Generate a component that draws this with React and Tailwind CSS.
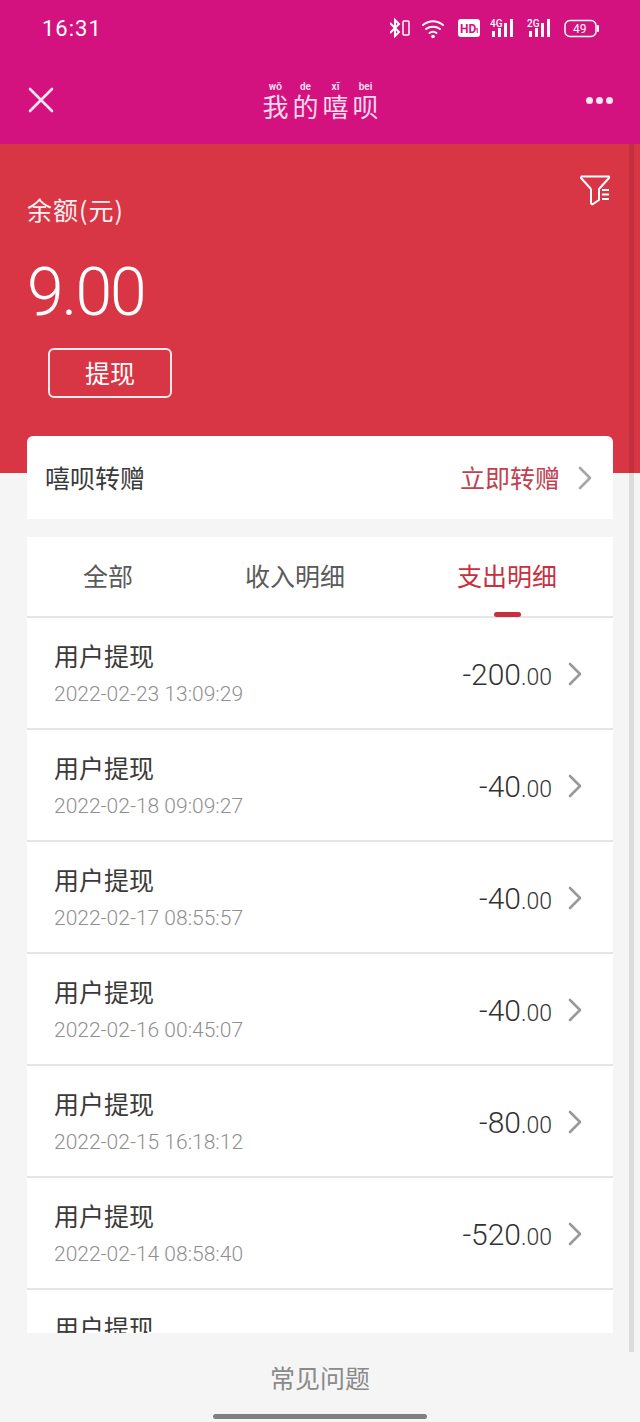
const cjk = { fontFamily: '"Noto Sans CJK SC", sans-serif' };

const rows = [
  { time: '2022-02-23 13:09:29', amount: '-200' },
  { time: '2022-02-18 09:09:27', amount: '-40' },
  { time: '2022-02-17 08:55:57', amount: '-40' },
  { time: '2022-02-16 00:45:07', amount: '-40' },
  { time: '2022-02-15 16:18:12', amount: '-80' },
  { time: '2022-02-14 08:58:40', amount: '-520' },
];

const titleChars = [
  ['wǒ', '我'],
  ['de', '的'],
  ['xī', '嘻'],
  ['bei', '呗'],
];

function Chevron({ className }) {
  return (
    <svg width="14" height="24" viewBox="0 0 14 24" fill="none" stroke="currentColor" strokeWidth="2.6" strokeLinecap="round" strokeLinejoin="round" className={className}>
      <path d="M2 2l10 10L2 22" />
    </svg>
  );
}

function StatusIcons() {
  return (
    <svg width="212" height="24" viewBox="0 0 212 24" fill="none">
      {/* bluetooth + vibrate */}
      <path d="M0 7l9 9-4 4V4l4 4-9 9" stroke="#fff" strokeWidth="2" />
      <rect x="13" y="5" width="6" height="14" rx="1" stroke="#fff" strokeWidth="1.500" />
      {/* wifi */}
      <path d="M33 9c6-5 14-5 20 0M36 13c4-3 10-3 14 0M39.500 17c2-1.500 5-1.500 7 0" stroke="#fff" strokeWidth="2" strokeLinecap="round" />
      <circle cx="43" cy="20.500" r="1.800" fill="#fff" />
      {/* HD badge */}
      <rect x="68" y="3" width="22" height="18" rx="3" fill="#fff" />
      <text x="70" y="17" fontSize="12" fontWeight="700" fill="#d3127f" fontFamily="Roboto, sans-serif">HD</text>
      <text x="85" y="17" fontSize="7" fontWeight="700" fill="#d3127f" fontFamily="Roboto, sans-serif">1</text>
      {/* 4G bars */}
      <text x="100" y="11" fontSize="10" fontWeight="500" fill="#fff" fontFamily="Roboto, sans-serif">4G</text>
      <rect x="102" y="15" width="3" height="6" fill="#fff" />
      <rect x="108" y="12" width="3" height="9" fill="#fff" />
      <rect x="114" y="7" width="3" height="14" fill="#fff" />
      <rect x="120" y="3" width="3" height="18" fill="#fff" />
      {/* 2G bars */}
      <text x="137" y="11" fontSize="10" fontWeight="500" fill="#fff" fontFamily="Roboto, sans-serif">2G</text>
      <rect x="139" y="15" width="3" height="6" fill="#fff" />
      <rect x="145" y="12" width="3" height="9" fill="#fff" />
      <rect x="151" y="7" width="3" height="14" fill="#fff" />
      <rect x="157" y="3" width="3" height="18" fill="#fff" />
      {/* battery */}
      <rect x="175" y="4.500" width="31" height="16" rx="5" stroke="#fff" strokeWidth="1.500" />
      <rect x="207" y="9" width="2" height="7" rx="1" fill="#fff" />
      <text x="183" y="17" fontSize="12" fill="#fff" fontFamily="Roboto, sans-serif">49</text>
    </svg>
  );
}

export default function App() {
  return (
    <div className="relative flex h-[1422px] w-[640px] flex-col overflow-hidden bg-[#f5f5f5]" style={cjk}>
      <header className="h-[144px] shrink-0 bg-[#d3127f] text-white">
        <div className="flex h-[56px] items-center justify-between pl-[42px] pr-[38px]">
          <span className="text-[22px] tracking-[1px] [font-family:Roboto,sans-serif]">16:31</span>
          <StatusIcons />
        </div>
        <div className="flex h-[88px] items-start justify-between px-[27px] pt-[30px]">
          <svg width="28" height="28" viewBox="0 0 28 28" fill="none" stroke="#fbe4f1" strokeWidth="2.6" strokeLinecap="round">
            <path d="M3 3l22 22M25 3L3 25" />
          </svg>
          <div className="-mt-[4px] flex gap-[2px]">
            {titleChars.map(([py, ch]) => (
              <div key={ch} className="flex w-[28px] flex-col items-center">
                <span className="text-[10px] leading-[10px] font-bold text-[#fbd9ec] [font-family:Roboto,sans-serif]">{py}</span>
                <span className="text-[26px] leading-[28px] text-[#fbd9ec]">{ch}</span>
              </div>
            ))}
          </div>
          <div className="mt-[11px] flex gap-[3px]">
            <span className="size-[7px] rounded-full bg-[#fbe4f1]" />
            <span className="size-[7px] rounded-full bg-[#fbe4f1]" />
            <span className="size-[7px] rounded-full bg-[#fbe4f1]" />
          </div>
        </div>
      </header>

      <main className="relative flex min-h-0 flex-1 flex-col">
        <section className="relative h-[329px] shrink-0 bg-[#d93645] pl-[27px] pt-[47px] text-white">
          <svg width="32" height="32" viewBox="0 0 32 32" fill="none" stroke="#fff" strokeWidth="2" strokeLinejoin="round" className="absolute right-[29px] top-[30px]">
            <path d="M2 2.500h28v1.500L20 15v9M12 15L2 4v-1.500M12 15v14c0 1 1 1.500 2 1l6-4v-2" />
            <path d="M23 16h7M23 20.500h7M23 25h7" />
          </svg>
          <p className="text-[25px] leading-[36px] tracking-[1px] text-[#fdf0f1]">余额(元)</p>
          <p className="mt-[30px] text-[66px] leading-[72px] font-light tracking-[-2px] [font-family:Roboto,sans-serif]">9.00</p>
          <button className="ml-[21px] mt-[19px] flex h-[50px] w-[124px] items-center justify-center rounded-[6px] border-2 border-[#fbe9eb] text-[25px]">提现</button>
        </section>

        <div className="relative z-10 mx-[27px] -mt-[37px] flex h-[83px] shrink-0 items-center justify-between rounded-t-[6px] bg-white pl-[18px] pr-[21px] text-[25px]">
          <span className="text-[#3a3a3a]">嘻呗转赠</span>
          <div className="flex items-center gap-[18px]">
            <span className="text-[#c2414e]">立即转赠</span>
            <Chevron className="text-[#a6a6a6]" />
          </div>
        </div>

        <div className="mx-[27px] mt-[18px] min-h-0 flex-1 overflow-hidden">
          <div className="relative flex h-[81px] items-center justify-around border-b-2 border-[#e6e6e6] bg-white pb-[2px] text-[25px] text-[#5a5a5a]">
            <span>全部</span>
            <span>收入明细</span>
            <span className="text-[#c9303f]">支出明细</span>
            <span className="absolute -bottom-[1px] left-[467px] h-[5px] w-[27px] rounded-full bg-[#c9303f]" />
          </div>
          {rows.map((row) => (
            <div key={row.time} className="flex h-[112px] items-center justify-between border-b-2 border-[#e6e6e6] bg-white pl-[27px] pr-[31px] pt-[2px]">
              <div>
                <p className="text-[25px] leading-[36px] text-[#3a3a3a]">用户提现</p>
                <p className="mt-[3px] text-[21px] leading-[36px] font-light text-[#8f8f8f] [font-family:Roboto,sans-serif]">{row.time}</p>
              </div>
              <div className="flex items-center gap-[16px]">
                <span className="font-light text-[#333] [font-family:Roboto,sans-serif]">
                  <span className="text-[30px]">{row.amount}</span>
                  <span className="text-[23px]">.00</span>
                </span>
                <Chevron className="text-[#999]" />
              </div>
            </div>
          ))}
          {/* last row is cut by the footer, only the top of its title shows */}
          <div className="h-[60px] bg-white pl-[27px] pt-[19px]">
            <p className="text-[25px] leading-[36px] text-[#3a3a3a]">用户提现</p>
          </div>
        </div>

        <div className="absolute right-[6px] top-0 h-[1208px] w-[5px] bg-black/10" />

        <footer className="flex h-[89px] shrink-0 flex-col items-center bg-[#f5f5f5]">
          <span className="mt-[26px] text-[25px] leading-[36px] text-[#8a8a8a]">常见问题</span>
        </footer>
      </main>
      <div className="absolute bottom-[3px] left-[213px] h-[5px] w-[214px] rounded-full bg-[#808080]" />
    </div>
  );
}
